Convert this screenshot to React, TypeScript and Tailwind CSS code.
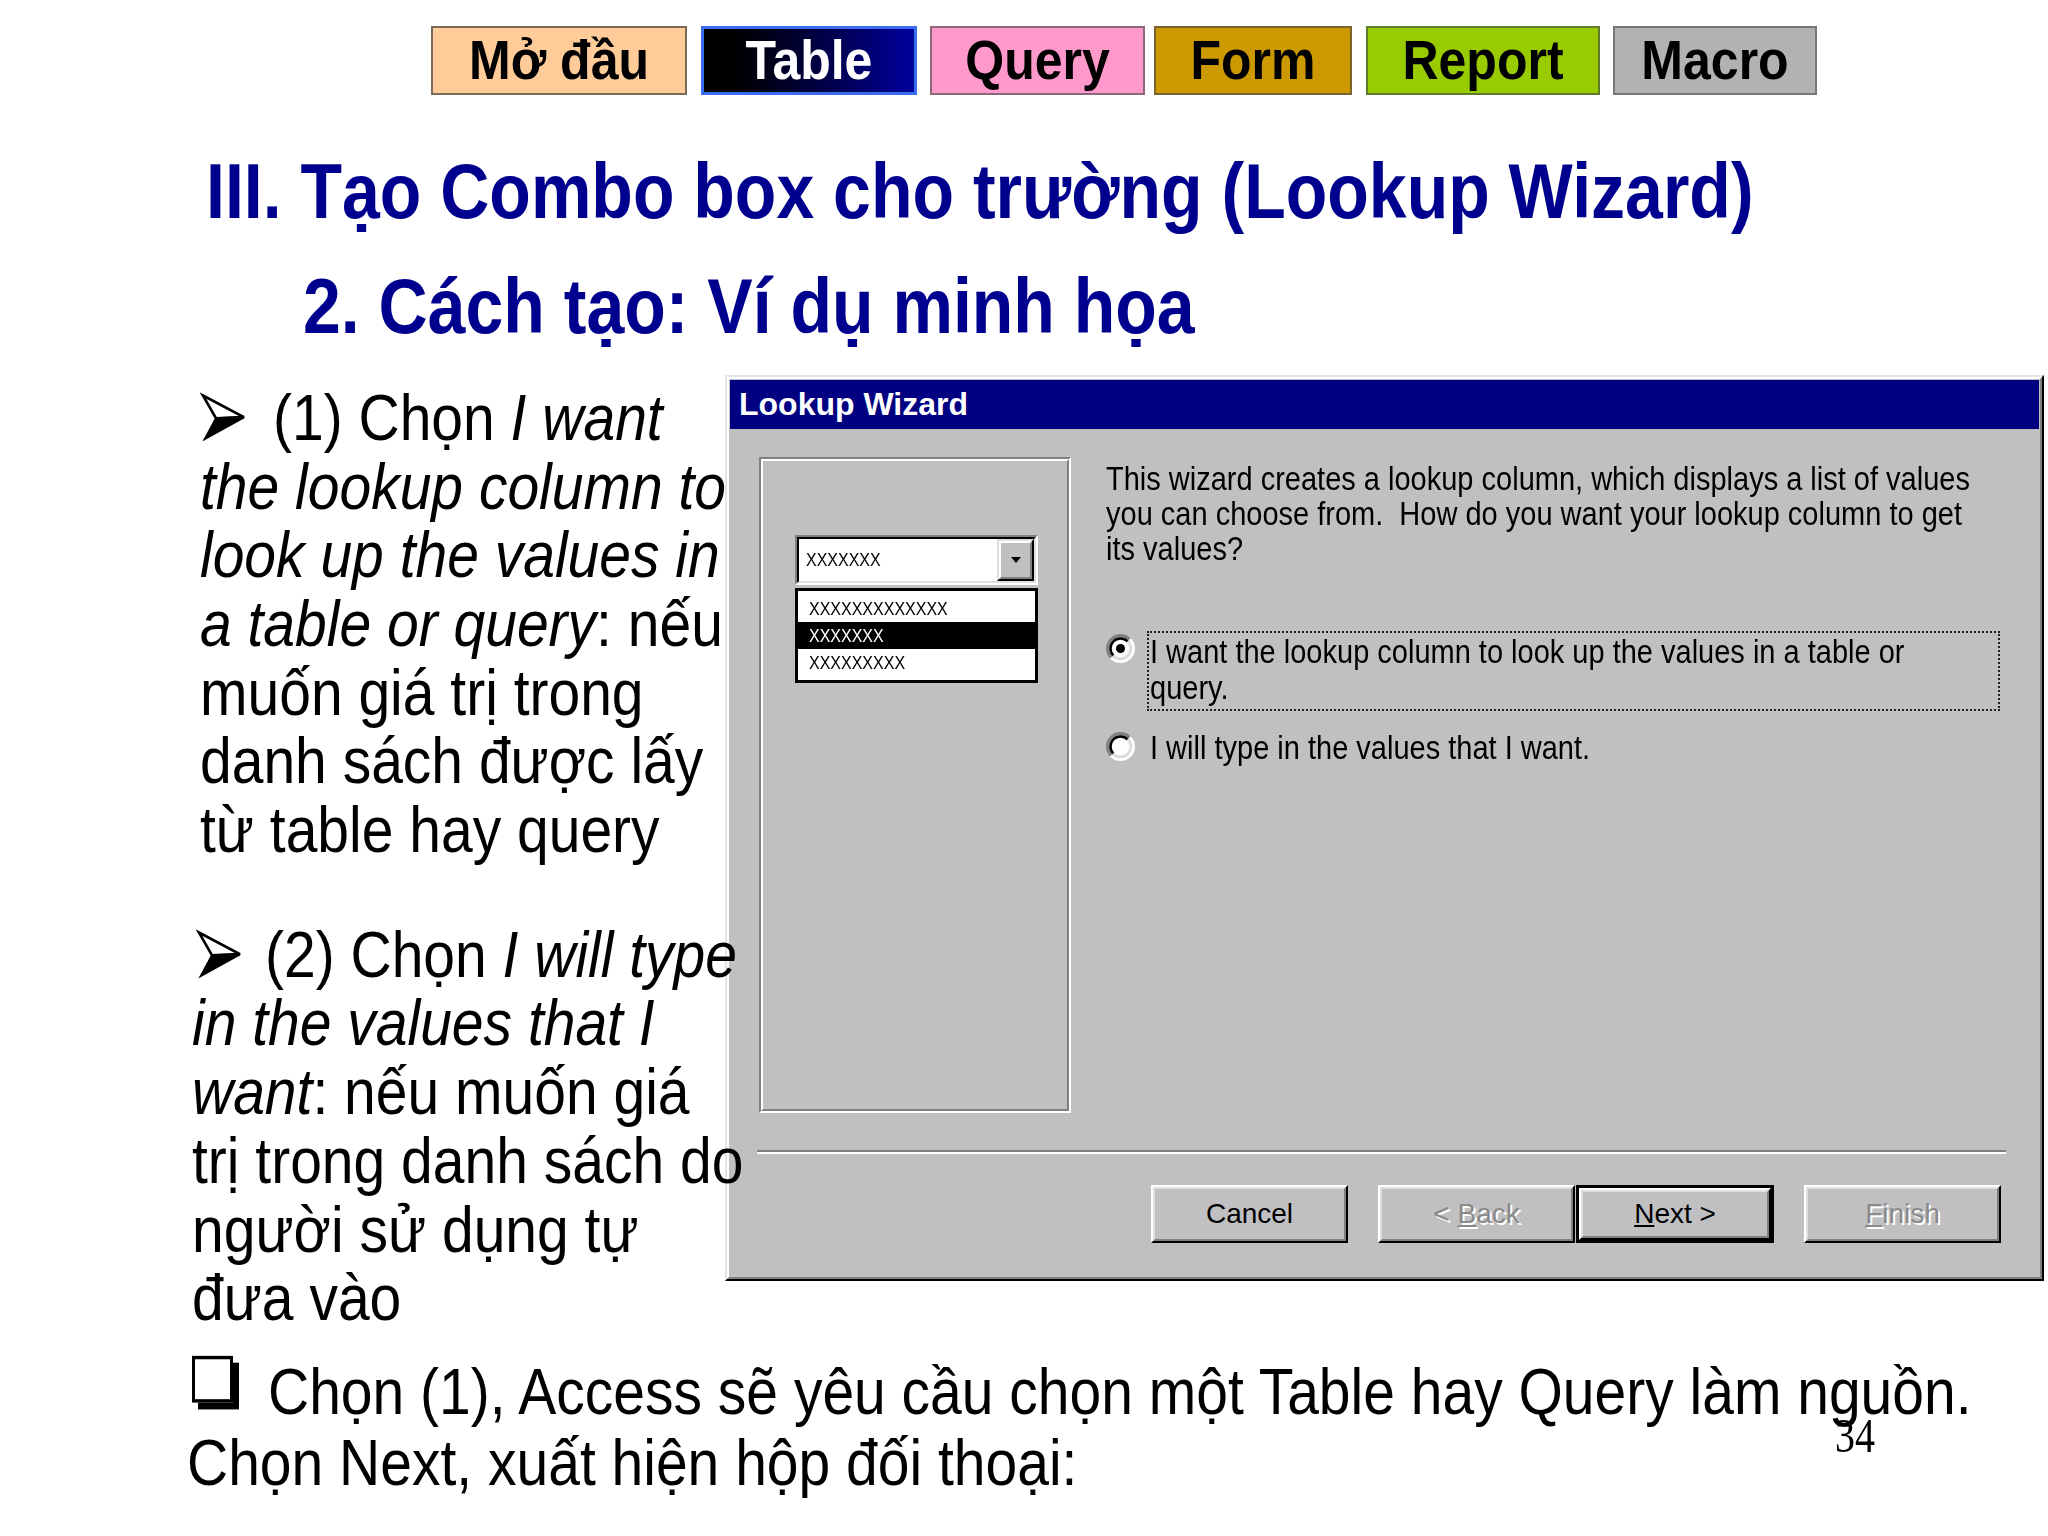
import React from "react";

const Arrow = () => (
  <svg width="46" height="44" viewBox="0 0 46 44" className="shrink-0">
    <polygon points="3,3 44,22 16,23" fill="#fff" stroke="#000" strokeWidth="2.5" strokeLinejoin="miter" />
    <polygon points="16,23 44,22 5,41" fill="#000" stroke="#000" strokeWidth="2" strokeLinejoin="miter" />
  </svg>
);

const Line = ({ children }: { children: React.ReactNode }) => (
  <div className="h-[68.7px] leading-[68.7px] whitespace-nowrap flex items-center scale-y-[1.14] origin-[center_54px]">
    {children}
  </div>
);

const Radio = ({ checked }: { checked?: boolean }) => (
  <svg width="29" height="29" viewBox="0 0 29 29" className="shrink-0">
    <circle cx="14.5" cy="14.5" r="13" fill="none" stroke="#808080" strokeWidth="3" strokeDasharray="41 41" transform="rotate(135 14.5 14.5)" />
    <circle cx="14.5" cy="14.5" r="13" fill="none" stroke="#ffffff" strokeWidth="3" strokeDasharray="41 41" transform="rotate(-45 14.5 14.5)" />
    <circle cx="14.5" cy="14.5" r="10" fill="#fff" />
    <circle cx="14.5" cy="14.5" r="10" fill="none" stroke="#000" strokeWidth="2.5" strokeDasharray="31.4 31.4" transform="rotate(135 14.5 14.5)" />
    <circle cx="14.5" cy="14.5" r="10" fill="none" stroke="#dfdfdf" strokeWidth="2.5" strokeDasharray="31.4 31.4" transform="rotate(-45 14.5 14.5)" />
    {checked && <circle cx="14.5" cy="14.5" r="4.5" fill="#000" />}
  </svg>
);

const Btn = ({
  children,
  disabled,
  def,
}: {
  children: React.ReactNode;
  disabled?: boolean;
  def?: boolean;
}) => {
  const inner = (
    <div className="h-full w-full border-2 border-t-white border-l-white border-r-black border-b-black">
      <div
        className={
          "h-full w-full border-2 border-t-[#dfdfdf] border-l-[#dfdfdf] border-r-[#808080] border-b-[#808080] flex items-center justify-center text-[28px] " +
          (disabled ? "text-[#8a8a8a] [text-shadow:2px_2px_0_#fff]" : "text-black")
        }
      >
        {children}
      </div>
    </div>
  );
  return def ? (
    <div className="w-[198px] h-[58px] border-[3px] border-black">{inner}</div>
  ) : (
    <div className="w-[197px] h-[58px]">{inner}</div>
  );
};

export default function App() {
  return (
    <div className="relative w-[2048px] h-[1536px] overflow-hidden bg-white font-['Liberation_Sans',Arial,sans-serif] text-black">
      {/* Tabs */}
      <div className="pt-[26px] pl-[431px] flex h-[95px]">
        <div className="w-[256px] h-[69px] border-2 border-[#7a6a5a] bg-[#ffcc99] flex items-center justify-center text-[50px] font-bold">
          <span className="inline-block scale-y-[1.12]">Mở đầu</span>
        </div>
        <div className="ml-[14px] w-[216px] h-[69px] border-[3px] border-[#3c6cf2] bg-gradient-to-r from-black to-[#00009e] flex items-center justify-center text-[50px] font-bold text-white">
          <span className="inline-block scale-y-[1.12]">Table</span>
        </div>
        <div className="ml-[13px] w-[215px] h-[69px] border-2 border-[#8a6a7a] bg-[#ff99cc] flex items-center justify-center text-[50px] font-bold">
          <span className="inline-block scale-y-[1.12]">Query</span>
        </div>
        <div className="ml-[9px] w-[198px] h-[69px] border-2 border-[#7a6530] bg-[#cc9900] flex items-center justify-center text-[50px] font-bold">
          <span className="inline-block scale-y-[1.12]">Form</span>
        </div>
        <div className="ml-[14px] w-[234px] h-[69px] border-2 border-[#5f7a2a] bg-[#99cc00] flex items-center justify-center text-[50px] font-bold">
          <span className="inline-block scale-y-[1.12]">Report</span>
        </div>
        <div className="ml-[13px] w-[204px] h-[69px] border-2 border-[#777777] bg-[#b2b2b2] flex items-center justify-center text-[50px] font-bold">
          <span className="inline-block scale-y-[1.12]">Macro</span>
        </div>
      </div>

      {/* Headings */}
      <div className="mt-[59px] pl-[206px] h-[80px] leading-[80px] text-[68px] font-bold text-[#00008f] whitespace-nowrap scale-y-[1.14] origin-[center_63.6px]">
        III. Tạo Combo box cho trường (Lookup Wizard)
      </div>
      <div className="mt-[35.4px] pl-[303px] h-[80px] leading-[80px] text-[68px] font-bold text-[#00008f] whitespace-nowrap scale-y-[1.14] origin-[center_63.6px]">
        2. Cách tạo: Ví dụ minh họa
      </div>

      {/* Main row */}
      <div className="mt-[25.6px] flex items-start">
        {/* Left text */}
        <div className="ml-[192px] w-[533px] shrink-0 pt-[11px] relative z-10 text-[57px]">
          <div className="pl-[8px]">
            <Line>
              <span className="w-[73px] shrink-0 flex items-center">
                <Arrow />
              </span>
              <span className="shrink-0">(1) Chọn&nbsp;</span>
              <i className="shrink-0">I want</i>
            </Line>
            <Line>
              <i>the lookup column to</i>
            </Line>
            <Line>
              <i>look up the values in</i>
            </Line>
            <Line>
              <i className="shrink-0">a table or query</i>
              <span className="shrink-0">: nếu</span>
            </Line>
            <Line>muốn giá trị trong</Line>
            <Line>danh sách được lấy</Line>
            <Line>từ table hay query</Line>
          </div>
          <div className="mt-[56px]">
            <Line>
              <span className="w-[73px] shrink-0 flex items-center pl-[4px]">
                <Arrow />
              </span>
              <span className="shrink-0">(2) Chọn&nbsp;</span>
              <i className="shrink-0">I will type</i>
            </Line>
            <Line>
              <i>in the values that I</i>
            </Line>
            <Line>
              <i className="shrink-0">want</i>
              <span className="shrink-0">: nếu muốn giá</span>
            </Line>
            <Line>trị trong danh sách do</Line>
            <Line>người sử dụng tự</Line>
            <Line>đưa vào</Line>
          </div>
        </div>

        {/* Dialog */}
        <div className="w-[1319px] h-[906px] shrink-0 border-2 border-t-[#e4e4e4] border-l-[#e4e4e4] border-r-black border-b-black bg-[#c0c0c3]">
          <div className="h-full border-2 border-t-white border-l-white border-r-[#808080] border-b-[#808080] p-[1px] flex flex-col">
            <div className="h-[49px] leading-[49px] bg-[#000080] text-white font-bold text-[32px] pl-[9px] whitespace-nowrap">
              Lookup Wizard
            </div>

            <div className="pl-[29px] pt-[28px] flex items-start">
              {/* left etched panel */}
              <div className="w-[312px] h-[656px] shrink-0 border-2 border-t-[#808080] border-l-[#808080] border-r-white border-b-white">
                <div className="h-full border-2 border-t-white border-l-white border-r-[#808080] border-b-[#808080] pl-[32px] pt-[74px]">
                  {/* combo */}
                  <div className="w-[243px] h-[50px] border-2 border-t-[#808080] border-l-[#808080] border-r-white border-b-white">
                    <div className="h-full border-2 border-t-black border-l-black border-r-[#dfdfdf] border-b-[#dfdfdf] bg-white flex">
                      <div className="flex-1 flex items-center pl-[7px] text-[16px]">
                        <span className="inline-block scale-y-[1.2]">XXXXXXX</span>
                      </div>
                      <div className="w-[37px] h-full border-2 border-t-[#dfdfdf] border-l-[#dfdfdf] border-r-black border-b-black bg-[#c0c0c3]">
                        <div className="h-full border-2 border-t-white border-l-white border-r-[#808080] border-b-[#808080] flex items-center justify-center">
                          <svg width="12" height="8" viewBox="0 0 12 8">
                            <polygon points="1,1 11,1 6,7" fill="#000" />
                          </svg>
                        </div>
                      </div>
                    </div>
                  </div>
                  {/* list */}
                  <div className="mt-[3px] w-[243px] h-[95px] border-[3px] border-black bg-white pt-[4px] text-[16px]">
                    <div className="h-[27px] leading-[27px] pl-[11px]">
                      <span className="inline-block scale-y-[1.2]">XXXXXXXXXXXXX</span>
                    </div>
                    <div className="h-[27px] leading-[27px] pl-[11px] bg-black text-white">
                      <span className="inline-block scale-y-[1.2]">XXXXXXX</span>
                    </div>
                    <div className="h-[27px] leading-[27px] pl-[11px]">
                      <span className="inline-block scale-y-[1.2]">XXXXXXXXX</span>
                    </div>
                  </div>
                </div>
              </div>

              {/* right content */}
              <div className="ml-[35px] pt-[6.5px] text-[29px] whitespace-pre">
                <div className="h-[35px] leading-[35px] scale-y-[1.12] origin-[center_27.5px]">This wizard creates a lookup column, which displays a list of values</div>
                <div className="h-[35px] leading-[35px] scale-y-[1.12] origin-[center_27.5px]">you can choose from.  How do you want your lookup column to get</div>
                <div className="h-[35px] leading-[35px] scale-y-[1.12] origin-[center_27.5px]">its values?</div>

                <div className="mt-[62.5px] flex items-start">
                  <div className="mt-[3px] mr-[12px]">
                    <Radio checked />
                  </div>
                  <div className="w-[853px] h-[80px] border-2 border-dotted border-[#202020] pl-[1px] pt-[2px]">
                    <div className="h-[36px] leading-[36px] scale-y-[1.12] origin-[center_28px]">I want the lookup column to look up the values in a table or</div>
                    <div className="h-[36px] leading-[36px] scale-y-[1.12] origin-[center_28px]">query.</div>
                  </div>
                </div>

                <div className="mt-[18px] flex items-start">
                  <div className="mt-[3px] mr-[12px]">
                    <Radio />
                  </div>
                  <div className="border-2 border-transparent pl-[1px]">
                    <div className="h-[36px] leading-[36px] scale-y-[1.12] origin-[center_28px]">I will type in the values that I want.</div>
                  </div>
                </div>
              </div>
            </div>

            {/* separator */}
            <div className="mt-[37px] ml-[27px] w-[1249px]">
              <div className="h-[2px] bg-[#808080]" />
              <div className="h-[2px] bg-white" />
            </div>

            {/* buttons */}
            <div className="mt-[31px] pl-[421px] flex items-start">
              <Btn>Cancel</Btn>
              <div className="ml-[30px]">
                <Btn disabled>
                  <span>
                    &lt; <span className="underline">B</span>ack
                  </span>
                </Btn>
              </div>
              <div className="ml-[1px]">
                <Btn def>
                  <span>
                    <span className="underline">N</span>ext &gt;
                  </span>
                </Btn>
              </div>
              <div className="ml-[30px]">
                <Btn disabled>
                  <span>
                    <span className="underline">F</span>inish
                  </span>
                </Btn>
              </div>
            </div>
          </div>
        </div>
      </div>

      {/* Bottom text */}
      <div className="mt-[24px] text-[57px]">
        <div className="h-[71px] leading-[71px] whitespace-nowrap flex items-start pl-[192px] scale-y-[1.14] origin-[center_55px]">
          <div className="w-[76px] shrink-0 pt-[4px]">
            <div className="w-[41px] h-[41px] border-[3px] border-black bg-white shadow-[6px_6px_0_#000]" />
          </div>
          <span>Chọn (1), Access sẽ yêu cầu chọn một Table hay Query làm nguồn.</span>
        </div>
        <div className="h-[71px] leading-[71px] whitespace-nowrap pl-[187px] scale-y-[1.14] origin-[center_55px]">
          Chọn Next, xuất hiện hộp đối thoại:
        </div>
      </div>

      {/* page number */}
      <div className="absolute left-[1835px] top-[1419px] h-[40px] leading-[40px] text-[40px] font-['Liberation_Serif',serif] scale-y-[1.2] origin-[center_33px]">
        34
      </div>
    </div>
  );
}
